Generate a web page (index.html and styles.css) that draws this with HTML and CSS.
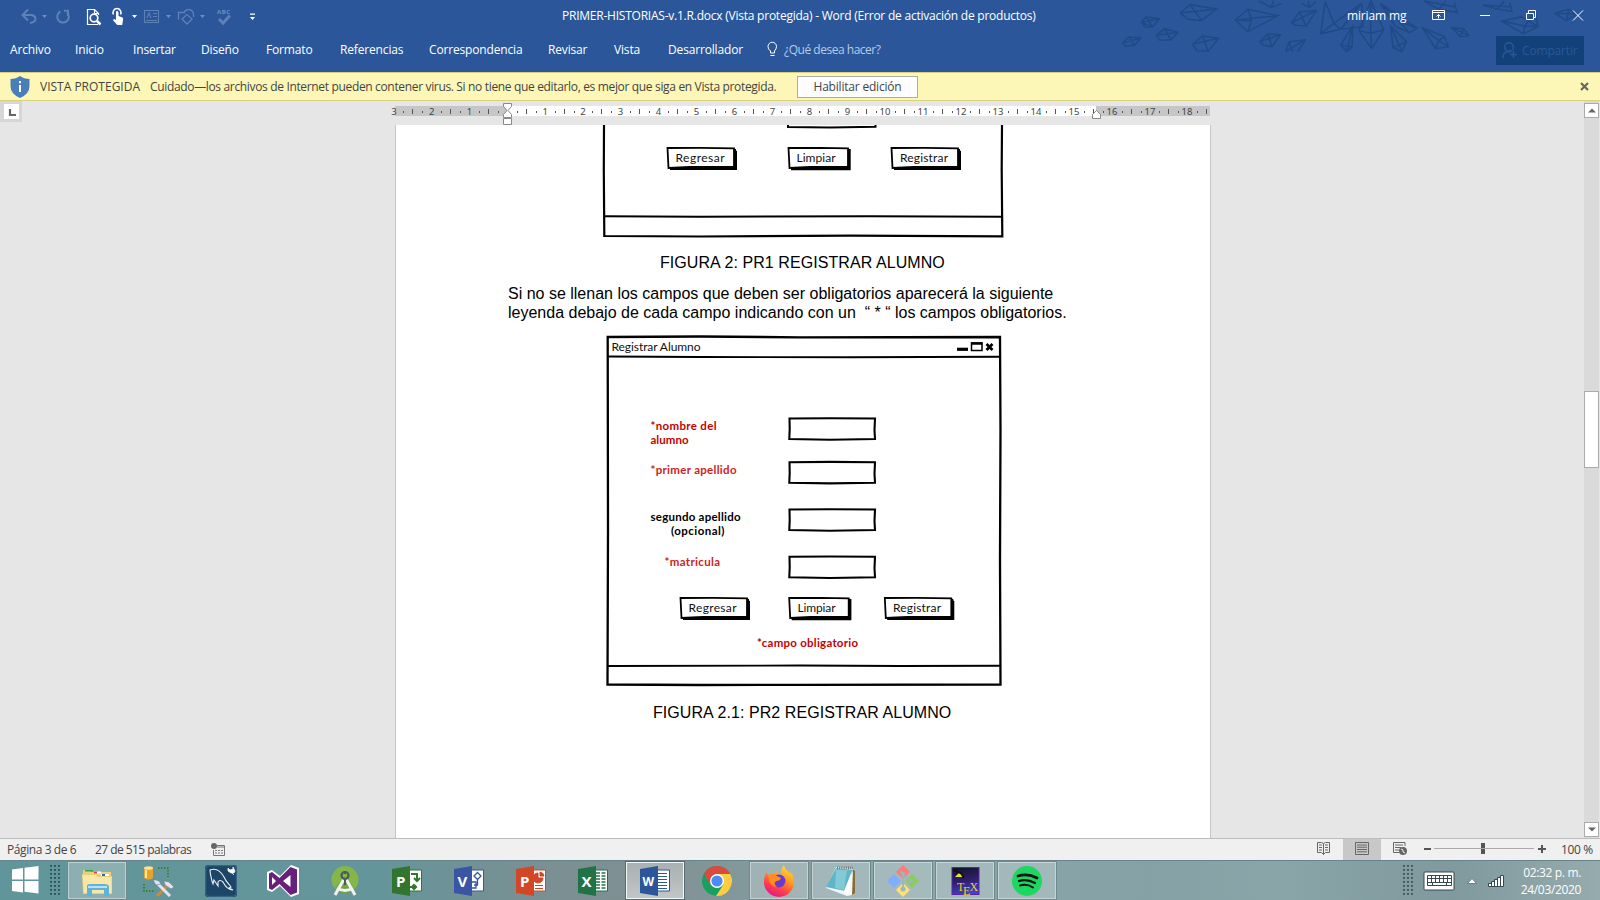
FILE: index.html
```html
<!DOCTYPE html>
<html lang="es">
<head>
<meta charset="utf-8">
<title>PRIMER-HISTORIAS-v.1.R.docx - Word</title>
<link rel="stylesheet" href="styles.css">
</head>
<body>
<div class="app">
  <header class="ribbon">
    <svg class="pattern" width="540" height="53" viewBox="0 0 1568 159" preserveAspectRatio="none" fill="none" stroke="#204a87" stroke-width="4.500">
      <path d="M236 67L250 51 289 56 269 80 248 82ZM236 67L289 56M250 51L269 80M236 67L269 80"/>
      <path d="M182 128L199 111 235 114 216 136 190 138ZM182 128L235 114M199 111L216 136"/>
      <path d="M280 106L304 86 342 97 322 119 290 121ZM280 106L342 97M304 86L322 119"/>
      <path d="M349 39L378 14 455 27 411 62 371 58ZM349 39L455 27M378 14L411 62"/>
      <path d="M385 133L414 108 460 115 430 154 398 152ZM385 133L460 115M414 108L430 154"/>
      <path d="M509 60L546 28 634 47 545 95ZM509 60L634 47M546 28L556 62 545 95M509 60L556 62"/>
      <path d="M578 3L613 22 644 10M613 22L620 3M702 10L725 22 744 5M725 22L720 3"/>
      <path d="M580 125L602 102 640 104 616 140 590 135ZM580 125L640 104M602 102L616 140"/>
      <path d="M673 68L695 36 745 31 715 78 684 76ZM673 68L745 31M695 36L715 78"/>
      <path d="M655 155L665 126 713 119 690 155M665 126L675 155M655 155L713 119"/>
      <path d="M770 3L757 101 815 88 876 10M770 3L795 70 757 101M795 70L876 10M795 70L815 88M876 10L880 80 815 88"/>
      <path d="M903 3L868 92 905 146 940 90ZM868 92L902 100 940 90M903 3L902 100 905 146"/>
      <path d="M850 78L815 135 832 155 848 140ZM850 78L832 155M815 135L848 140"/>
      <path d="M960 78L967 143 993 155 1006 125ZM960 78L993 155M967 143L1006 125"/>
      <path d="M930 10L1036 84 1015 98 975 80ZM930 10L985 65 1036 84M985 65L1015 98"/>
      <path d="M1053 84L1116 109 1128 140 1090 146ZM1053 84L1100 122 1128 140M1100 122L1090 146M1100 122L1116 109"/>
      <path d="M1057 3L1100 28 1153 37 1145 8M1057 3L1145 20M1100 28L1120 3"/>
      <path d="M1138 83L1173 86 1187 107 1162 110ZM1138 83L1187 107M1173 86L1162 110"/>
      <path d="M1228 15L1270 27 1312 34 1306 8M1228 15L1306 20M1270 27L1290 3"/>
      <path d="M1283 63L1340 50 1388 80 1345 102ZM1283 63L1350 78 1388 80M1350 78L1345 102M1350 78L1380 35 1388 80"/>
      <path d="M1437 40L1478 27 1500 42 1470 62ZM1437 40L1500 42M1478 27L1470 62"/>
    </svg>
    <div class="titlebar">
      <svg class="quick" width="270" height="32" viewBox="0 0 270 32" fill="none">
        <g stroke="#6f8fc0" stroke-width="2" opacity=".75">
          <path d="M23 15h9q3.500 1 3.500 4t-5.500 4M28 9.500L22.500 15l5.500 5.500"/>
          <path d="M60.500 11.500a5.800 5.800 0 1 0 6.500 1M64 10.700h5M68 10v6"/>
          <path d="M144.500 10.500h14v12h-14zM146 20.500h11M153 13.500h4M153 16.500h4M147 18l2-5 2 5" stroke-width="1.100"/>
          <path d="M178.500 19.500v-7h6.500M184 12.500a5 5 0 0 1 9.500 1.500v3M182 19l5-4.500 5 4.500-5 5z" stroke-width="1.300"/>
          <path d="M219 19l4 4 7-7.500" stroke-width="3"/>
        </g>
        <path d="M42 15h5l-2.500 3zM166 15h5l-2.500 3zM200 15h5l-2.500 3z" fill="#6f8fc0"/>
        <path d="M132 15h5l-2.500 3zM250 17h5l-2.500 3zM250 13.500h5v1.300h-5z" fill="#fff"/>
        <path d="M89 24.500h-1.500v-15h7l4 4v1.500M94.500 9.500v4h4" stroke="#fff" stroke-width="1.200"/>
        <circle cx="94" cy="18" r="3.800" stroke="#fff" stroke-width="1.700"/><path d="M97 21l3.500 3.500" stroke="#fff" stroke-width="2.500"/><path d="M88 24.500h10" stroke="#fff"/>
        <path d="M116 12.500q-.5-1.500 1-1.500t1.500 1.500V16l4 1.500q1 .5.500 2.500l-.8 5h-5l-4-4.500q-.5-1.500 1-1.500l1.800 1z" fill="#fff"/><path d="M113.500 14.500a4 4 0 1 1 7 0" stroke="#fff" stroke-width="1.500"/>
        <text class="abc" x="217" y="14" fill="#6f8fc0" textLength="13">ABC</text>
      </svg>
      <span class="doc-title">PRIMER-HISTORIAS-v.1.R.docx (Vista protegida) - Word (Error de activación de productos)</span>
      <span class="user">miriam mg</span>
      <svg class="controls" width="160" height="32" viewBox="0 0 160 32" fill="none" stroke="#fff">
        <path d="M2.500 10.500h12v9h-12zM2.500 12.500h12M8.500 18.500v-4M6.500 16.500l2-2 2 2"/>
        <path d="M50 15.500h10M96.500 13.500h7v6h-7zM98.500 13.500v-3h7v7h-2M143 10.500l10 10M153 10.500l-10 10"/>
      </svg>
    </div>
    <nav class="tabs">
      <span class="t1">Archivo</span><span class="t2">Inicio</span><span class="t3">Insertar</span><span class="t4">Diseño</span><span class="t5">Formato</span><span class="t6">Referencias</span><span class="t7">Correspondencia</span><span class="t8">Revisar</span><span class="t9">Vista</span><span class="t10">Desarrollador</span>
      <svg width="16" height="18" viewBox="0 0 16 18" fill="none" stroke="#fff"><path d="M4.500 12v-2Q1.800 8 2 5.500A4 4 0 0 1 10.500 5.500Q10.500 8 8.500 10v2zM4.500 14.500h4"/></svg>
      <span class="ask">¿Qué desea hacer?</span>
      <span class="share"><svg width="18" height="18" viewBox="0 0 18 18" fill="none" stroke="#2b579a" stroke-width="1.400"><circle cx="8" cy="6" r="4.300"/><path d="M2 17q0-6 5-6.500M10 11.500q-1-1-3-1M12.500 10v7M9 13.500h7"/></svg><span>Compartir</span></span>
    </nav>
  </header>

  <section class="notice">
    <svg width="20" height="22" viewBox="0 0 20 22"><path d="M10 0q4 3 9.500 3v7q0 8-9.500 12Q.5 18 .5 10V3Q6 3 10 0z" fill="#4a7ebb"/><path d="M9 5h2v2.300H9zM9 9h2v7H9z" fill="#fff"/></svg>
    <span class="notice-title">VISTA PROTEGIDA</span>
    <span class="notice-text">Cuidado—los archivos de Internet pueden contener virus. Si no tiene que editarlo, es mejor que siga en Vista protegida.</span>
    <span class="enable">Habilitar edición</span>
    <svg class="dismiss" width="9" height="9" viewBox="0 0 9 9" stroke="#666" stroke-width="2.200"><path d="M1 1l7 7M8 1L1 8"/></svg>
  </section>

  <main class="workspace">
    <div class="left-gutter"><span class="tabstop"><svg width="15" height="15" viewBox="0 0 15 15"><path d="M6 5v6h6" fill="none" stroke="#666" stroke-width="2.200"/></svg></span></div>
    <div class="column">
      <svg class="ruler" width="822" height="24" viewBox="390 101 822 24">
        <path d="M395 106h112v10h-112zM1096 106h114v10h-114z" fill="#c6c6c6"/><path d="M507 106h589v10h-589z" fill="#fff"/>
        <g class="ticks">
          <path d="M412.800 109v5.200M450.600 109v5.200M488.400 109v5.200M526.200 109v5.200M564 109v5.200M601.800 109v5.200M639.600 109v5.200M677.400 109v5.200M715.200 109v5.200M753 109v5.200M790.800 109v5.200M828.600 109v5.200M866.400 109v5.200M904.200 109v5.200M942 109v5.200M979.800 109v5.200M1017.600 109v5.200M1055.400 109v5.200M1093.200 109v5.200M1131 109v5.200M1168.800 109v5.200M1206.600 109v5.200"/>
          <path d="M403.400 111.500H1208" stroke-width="2" stroke-dasharray="1 17.900"/>
        </g>
        <g class="ruler-num"><text x="394" y="115">3</text><text x="431.700" y="115">2</text><text x="469.500" y="115">1</text><text x="545.300" y="115">1</text><text x="583" y="115">2</text><text x="620.500" y="115">3</text><text x="658.500" y="115">4</text><text x="696.500" y="115">5</text><text x="734.500" y="115">6</text><text x="772.500" y="115">7</text><text x="809.500" y="115">8</text><text x="847.500" y="115">9</text><text x="885" y="115">10</text><text x="923" y="115">11</text><text x="961" y="115">12</text><text x="998" y="115">13</text><text x="1036" y="115">14</text><text x="1074" y="115">15</text><text x="1112" y="115">16</text><text x="1150" y="115">17</text><text x="1187" y="115">18</text></g>
        <path d="M503.500 103.500h8v3l-3.500 4 3.500 4v3h-8v-3l3.500-4-3.500-4zM503.500 118.500h8v6h-8zM1092.500 118.500v-4l4-4 4 4v4z" fill="#fff" stroke="#888"/>
      </svg>
      <article class="page">
        <svg class="figure-one" width="402" height="114" viewBox="602 125 402 114" fill="none" stroke="#000">
          <path d="M604 125L603.800 170 604.300 236L700 236.500 850 235.600 1002.300 236.300 1001.700 170 1002 125" stroke-width="2.200"/>
          <path d="M604 216.300L700 216.800 870 216.200 1002 216.700M788 125v2L830 127.500 875.500 126.800V125" stroke-width="2"/>
          <g id="btn-wide"><path d="M670 168.500h64.500V150l2.500 1v19h-66.500z" fill="#000" stroke="none"/><path d="M734.500 149v20M670 168.500h66" stroke-width="3"/><path d="M667.500 148L700 147.800 734 148.300V167L690 166.800 668.500 168z" fill="#fff" stroke-width="1.800"/></g>
          <g id="btn-narrow"><path d="M849 149v21M791 168.500h59.500" stroke-width="3.400"/><path d="M788.500 148L820 147.800 848 148.300V167L810 166.800 789.500 168z" fill="#fff" stroke-width="1.800"/></g>
          <use href="#btn-wide" x="224"/>
          <g class="sketch-text"><text x="675.500" y="161.500" textLength="49">Regresar</text><text x="796.500" y="161.500" textLength="39">Limpiar</text><text x="900" y="161.500" textLength="48">Registrar</text></g>
        </svg>
        <p class="caption cap-one">FIGURA 2: PR1 REGISTRAR ALUMNO</p>
        <p class="body-text"><span>Si no se llenan los campos que deben ser obligatorios aparecerá la siguiente</span><br><span class="second">leyenda debajo de cada campo indicando con un&nbsp; “ * “ los campos obligatorios.</span></p>
        <svg class="figure-two" width="396" height="352" viewBox="606 335 396 352" fill="none" stroke="#000">
          <path d="M607.700 337L700 336.500 800 337.300 1000 337 1000.500 430 1000 560 1000.500 684.500 800 684.800 700 685 607.500 684.500 608 530z" stroke-width="2.300"/>
          <path d="M608 356.500L700 357 850 357.300 1000 356.700M608 666L800 665.500 900 666 1000 665.700" stroke-width="1.900"/>
          <path d="M957 349.300h11" stroke-width="3.200"/><path d="M971.500 343h10.500v7.500h-10.500z" stroke-width="1.500"/><path d="M971 343.500h11.500" stroke-width="2.500"/><path d="M986.500 344l6 6M992.500 344l-6 6" stroke-width="2.700"/>
          <g id="field" stroke-width="2.100"><path d="M789.500 418.500L830 418.200 875 418.500 874.500 430 875 439 830 439.700 789.300 439 789.700 429z"/></g>
          <use href="#field" y="43.700"/><use href="#field" y="91"/><use href="#field" y="138.300"/>
          <use href="#btn-wide" x="13" y="450"/><use href="#btn-narrow" x=".7" y="450"/><use href="#btn-wide" x="217.300" y="450"/>
          <g class="sketch-text">
            <text x="611.500" y="350.500" textLength="89">Registrar Alumno</text>
            <text x="688.500" y="612" textLength="48">Regresar</text><text x="797.500" y="612" textLength="38">Limpiar</text><text x="893" y="612" textLength="48">Registrar</text>
          </g>
          <g class="sketch-label">
            <text x="650.500" y="429.500" textLength="66">*nombre del</text><text x="650.500" y="443.500" textLength="38">alumno</text>
            <text class="soft" x="650.500" y="473.500" textLength="86">*primer apellido</text>
            <text class="optional" x="650.500" y="520.500" textLength="90">segundo apellido</text><text class="optional" x="671" y="534.500" textLength="53.500">(opcional)</text>
            <text class="soft" x="664.500" y="566.300" textLength="55.500">*matricula</text>
            <text x="757" y="646.500" textLength="101">*campo obligatorio</text>
          </g>
        </svg>
        <p class="caption cap-two">FIGURA 2.1: PR2 REGISTRAR ALUMNO</p>
      </article>
    </div>
    <div class="scrollbar">
      <span class="arrow"><svg width="8" height="5" viewBox="0 0 8 5"><path d="M0 4.500L4 .5l4 4z" fill="#666"/></svg></span>
      <span class="thumb"></span>
      <span class="arrow"><svg width="8" height="5" viewBox="0 0 8 5"><path d="M0 .5h8l-4 4z" fill="#666"/></svg></span>
    </div>
  </main>

  <footer class="status">
    <span class="pages">Página 3 de 6</span><span class="words">27 de 515 palabras</span>
    <svg width="14" height="14" viewBox="0 0 14 14" fill="none" stroke="#777"><path d="M6 2.500h7.500v10h-11V7M4 7.500h2M7 7.500h2M10 7.500h2M4 10h2M7 10h2M10 10h2M6 4h7"/><circle cx="3" cy="3" r="3" fill="#666" stroke="none"/></svg>
    <svg class="views" width="100" height="21" viewBox="0 0 100 21" fill="none" stroke="#666">
      <path d="M29 0h38v21H29z" fill="#c8c8c8" stroke="none"/>
      <path d="M3.500 3.500h4l2 1 2-1h4v10h-4l-2 2-2-2h-4zM9.500 4.500v11M5 6h3M5 8.500h3M5 11h3M11 6h3M11 8.500h3M11 11h3"/>
      <path d="M41.500 3.500h13v12h-13zM43 6h10M43 8.200h10M43 10.500h10M43 12.800h10"/>
      <path d="M91 7V3.500H79.500v10H85M81 6h8M81 8.500h6M81 11h4"/><circle cx="89" cy="12" r="4" fill="#666" stroke="none"/><path d="M87 10l2 1v2l2 1" stroke="#eee"/>
    </svg>
    <svg class="zoombar" width="124" height="21" viewBox="0 0 124 21"><path d="M0 9h7v2H0zM114 9h8v2h-8zM117 6h2v8h-2zM57 4h4v11h-4z" fill="#555"/><path d="M10 9.500h100" stroke="#aaa"/></svg>
    <span class="percent">100 %</span>
  </footer>

  <div class="taskbar">
    <svg class="start" width="66" height="40" viewBox="0 0 66 40"><path d="M12 9.500l11-1.500v11.500H12zM24.500 7.800L38.500 6v13.500h-14zM12 21h11v11.500L12 31zM24.500 21h14v12.500l-14-1.800z" fill="#fff"/><path d="M51 5v31M55 5v31M59 5v31" stroke="#2f4a4e" stroke-width="1.800" stroke-dasharray="1.700 2.300"/></svg>
    <span class="task open"><svg width="32" height="32" viewBox="0 0 32 32"><path d="M2 5h7l1 2h20v6H2z" fill="#e9d27d"/><path d="M4 5h8v1.500H4z" fill="#34a34a"/><path d="M13 6.500h7v2h-7z" fill="#fff"/><path d="M13 6.500h3v2h-3z" fill="#d44"/><path d="M20 9h8v2h-8z" fill="#fff"/><path d="M21 9h3v2h-3z" fill="#36c"/><path d="M1 9h14l2 2h14v18H2z" fill="#e8cf7c"/><path d="M1.500 10h13l2 2h14v16H3z" fill="#f8e7a6"/><path d="M6 31V21q0-2 3-2h14q5 0 5 3v9h-5v-6H11v6z" fill="#5fb2dc"/><path d="M7 21h19v2H7z" fill="#b6e3f5"/></svg></span>
    <span class="task"><svg width="32" height="32" viewBox="0 0 32 32"><path d="M1 3v10q4 3 9 0V3z" fill="#e9a32a"/><ellipse cx="5.500" cy="3" rx="4.500" ry="1.800" fill="#fbe38d"/><path d="M3 5v8" stroke="#ffe7a0" stroke-width="2"/><path d="M15 3h10v9M1 19v7h10" fill="none" stroke="#2c7a22" stroke-width="1.500" stroke-dasharray="1.500 1.500"/><path d="M14 31l13-13" stroke="#cf8b35" stroke-width="3"/><path d="M13 17l14 14" stroke="#e2e5f0" stroke-width="3"/><path d="M21 16l5 1 5 5-3 2-6-4zM10 15l3 5 5-1-2-3-3-1z" fill="#dfe3ec" stroke="#74809a" stroke-width=".6"/></svg></span>
    <span class="task"><svg width="32" height="32" viewBox="0 0 32 32"><rect width="32" height="32" rx="3" fill="#1d4567"/><rect x=".7" y=".7" width="30.600" height="30.600" rx="3" fill="none" stroke="#3b6b91"/><path d="M8 19C7 17 5 8 5 5c5-2 10 0 14 7 2 5 5 7 7 10l-2 1 4 2c-4 0-8-4-10-8-2-2-4-2-5 0v4l-4-6z" fill="none" stroke="#e9f0f5" stroke-width="1.100"/><path d="M23 4l4 4 2 2M23 3l2 2 3-1v-2l2 4-1 2-3 0-3-2z" stroke="#fff" fill="#fff" stroke-width=".7"/></svg></span>
    <span class="task"><svg width="32" height="32" viewBox="0 0 32 32"><path d="M24 0l8 3v26l-8 3-11-11-8 6-5-2V7l5-2 8 6z" fill="#fff"/><path d="M23.500 2l6.500 2.500v23L23.500 30 12.500 19 5 25l-3-1.500v-15L5 7l7.500 6zM23.500 10L16 16l7.500 6zM5 12v8l4-4z" fill="#68217a" fill-rule="evenodd"/></svg></span>
    <span class="task"><svg width="32" height="32" viewBox="0 0 32 32"><circle cx="16" cy="14.500" r="13.500" fill="#84b64a"/><path d="M6 23L16 12l10 12-6 4H12z" fill="#699c43" opacity=".7"/><path d="M15 14L6 30M17 14l9 16M8 23q8 5 16 0" fill="none" stroke="#f2f2ef" stroke-width="3"/><circle cx="16" cy="10.500" r="3.500" fill="none" stroke="#4d5b5b" stroke-width="2.200"/><path d="M15 6h2v3h-2zM15 13h2v7h-2z" fill="#4d5b5b"/></svg></span>
    <span class="task"><svg width="32" height="32" viewBox="0 0 32 32"><path d="M16 5h14.500v21H16z" fill="#fff" stroke="#31752f"/><path d="M20 9h6v6M23 13l3 3 3-3M19 22h4" fill="none" stroke="#31752f" stroke-width="2"/><path d="M23 18.500l3.500 3.500-3.500 3.500-3.500-3.500z" fill="#31752f"/><path d="M1 4l18-3v30L1 28z" fill="#31752f"/><text class="glyph" x="5" y="21.500">P</text></svg></span>
    <span class="task"><svg width="32" height="32" viewBox="0 0 32 32"><path d="M16 5h14.500v21H16z" fill="#fff" stroke="#3955a3"/><path d="M21 11l3.500-3.500L28 11l-3.500 3.500zM24.500 14v6H21M18 17h5v6h-5" fill="none" stroke="#3955a3" stroke-width="1.300"/><path d="M1 4l18-3v30L1 28z" fill="#3955a3"/><text class="glyph" x="4.500" y="21.500">V</text></svg></span>
    <span class="task"><svg width="32" height="32" viewBox="0 0 32 32"><path d="M16 5h14.500v21H16z" fill="#fff" stroke="#d24726"/><path d="M23 8v5h5a5 5 0 1 1-5-5M25 7v4h4q0-3-4-4M20 20.500h8M20 23.500h8" fill="#d24726" stroke="#d24726"/><path d="M1 4l18-3v30L1 28z" fill="#d24726"/><text class="glyph" x="5" y="21.500">P</text></svg></span>
    <span class="task"><svg width="32" height="32" viewBox="0 0 32 32"><path d="M16 5h14.500v21H16z" fill="#fff" stroke="#217346"/><path d="M19 8h4M24.500 8h4M19 11h4M24.500 11h4M19 14h4M24.500 14h4M19 17h4M24.500 17h4M19 20h4M24.500 20h4M19 23h4M24.500 23h4" stroke="#217346" stroke-width="1.500"/><path d="M1 4l18-3v30L1 28z" fill="#217346"/><text class="glyph" x="4.500" y="21.500">X</text></svg></span>
    <span class="task active"><svg width="32" height="32" viewBox="0 0 32 32"><path d="M16 5h14.500v21H16z" fill="#fff" stroke="#2b579a"/><path d="M19 8.500h9M19 11.500h9M19 14.500h9M19 17.500h9M19 20.500h9M19 23.500h9" stroke="#2b579a" stroke-width="1.200"/><path d="M1 4l18-3v30L1 28z" fill="#2b579a"/><text class="glyph wide" x="3.500" y="20.500">W</text></svg></span>
    <span class="task"><svg width="32" height="32" viewBox="0 0 32 32"><circle cx="16" cy="16" r="15" fill="#18a05e"/><path d="M3 8.500A15 15 0 0 1 29 8.500H16l-7 11z" fill="#db4a3f"/><path d="M29.200 9A15 15 0 0 1 15 31l7.500-11.500L16 9z" fill="#ffcd42"/><circle cx="16" cy="16" r="7" fill="#fff"/><circle cx="16" cy="16" r="5.600" fill="#4c8bf5"/></svg></span>
    <span class="task open"><svg width="32" height="32" viewBox="0 0 32 32"><defs><linearGradient id="fox" x1=".8" y1="0" x2=".3" y2="1"><stop offset="0" stop-color="#ffe33d"/><stop offset=".4" stop-color="#ff9a1f"/><stop offset=".75" stop-color="#ff3950"/><stop offset="1" stop-color="#e31587"/></linearGradient></defs><path d="M4 7q0 3 2 3 3-2 5-1l3-3q0 3 2 4l3-1q-2-5 2-9 1 5 5 7l1 3q1-2 0-4 4 5 4 11a15 15 0 0 1-30 0Q1 11 4 7z" fill="url(#fox)"/><circle cx="16" cy="16" r="6.500" fill="#6a3bd0"/><path d="M5 10q5-2 9 1l4 2q-1 3-5 3-3 3 1 6-7-1-8-7z" fill="#ff8b21"/></svg></span>
    <span class="task open"><svg width="32" height="32" viewBox="0 0 32 32"><path d="M27 4l3 2v22l-3 2z" fill="#8b6a37"/><path d="M11 2L1 23l21 8 5-1 1-26z" fill="#f3f7f8"/><path d="M11 3L1 22l19 4 8-21z" fill="#5fb6c8"/><path d="M11 4l-1 19 9 2 3-20z" fill="#a9dbe3" opacity=".5"/><path d="M12 3h16" stroke="#777" stroke-width="3" stroke-dasharray="1 1.200"/><path d="M27 6l-8 20 4 4z" fill="#fff"/></svg></span>
    <span class="task open"><svg width="32" height="32" viewBox="0 0 32 32"><path d="M16 0l7 7-7 7-7-7z" fill="#ff7b7b"/><path d="M25 9l7 7-7 7-7-7z" fill="#89ce5c"/><path d="M16 18l7 7-7 7-7-7z" fill="#ffe173"/><path d="M7 9l7 7-7 7-7-7z" fill="#7fadff"/><path d="M13 6l3 3v15M17 11l6 5" stroke="#a2b4b7" stroke-width="1.800" fill="none"/><circle cx="16" cy="9" r="2" fill="#a2b4b7"/><circle cx="16" cy="24" r="2.500" fill="#a2b4b7"/><circle cx="24" cy="16" r="2" fill="#a2b4b7"/></svg></span>
    <span class="task open"><svg width="32" height="32" viewBox="0 0 32 32"><defs><linearGradient id="tex" x1=".4" y1="0" x2=".6" y2="1"><stop offset="0" stop-color="#11152c"/><stop offset=".5" stop-color="#31206e"/><stop offset="1" stop-color="#3a43e0"/></linearGradient></defs><rect x="3" y="2.500" width="27" height="27" fill="url(#tex)" stroke="#5a269b"/><path d="M6 12l4-4 5 4z" fill="#e8e53a"/><path d="M4 5l8 3 3 5" stroke="#111" fill="none" stroke-width="2"/><text class="tex" x="8" y="26">T</text><text class="tex" x="14" y="29.500">E</text><text class="tex" x="20.500" y="26">X</text></svg></span>
    <span class="task open"><svg width="32" height="32" viewBox="0 0 32 32" fill="none" stroke="#151515" stroke-linecap="round"><circle cx="16" cy="16" r="15" fill="#1ed760" stroke="none"/><path d="M7 11q10-3 19 2" stroke-width="2.800"/><path d="M8 16q8-2.500 16 2" stroke-width="2.300"/><path d="M9 20.500q7-2 13 2" stroke-width="2"/></svg></span>
    <svg class="tray" width="120" height="40" viewBox="0 0 120 40">
      <path d="M5 5v31M9 5v31M13 5v31" stroke="#2f4a4e" stroke-width="1.700" stroke-dasharray="1.700 2.300"/>
      <rect x="25" y="12" width="30" height="18" rx="1" fill="#fff" stroke="#344a50"/><path d="M28.500 15.500h24v10h-24zM28.500 18.500h24M28.500 22.500h24M32.500 15.500v7M36.500 15.500v7M40.500 15.500v7M44.500 15.500v7M48.500 15.500v7M33.500 22.500v3M47.500 22.500v3" fill="none" stroke="#344a50"/>
      <path d="M68.500 23.500l4.500-5 4.500 5z" fill="#fff" stroke="#587078" stroke-width=".8"/>
      <path d="M89.500 23.500h3v3h-3zM92.500 21.500h3v5h-3zM95.500 19.500h3v7h-3zM98.500 17.500h3v9h-3zM101.500 15.500h3v11h-3z" fill="#fff" stroke="#344a50"/>
    </svg>
    <div class="clock"><span>02:32 p. m.</span><span>24/03/2020</span></div>
  </div>
</div>
</body>
</html>
```
FILE: styles.css
```css
* { box-sizing: border-box; }
body { margin: 0; font-family: "Open Sans", "Noto Sans", sans-serif; font-size: 12px; color: #444; }
svg { display: block; flex: none; }
span { white-space: nowrap; }
.app { width: 1600px; height: 900px; display: flex; flex-direction: column; overflow: hidden; }

.ribbon { height: 72px; background: #2b579a; color: #fff; position: relative; flex: none; }
.pattern { position: absolute; left: 1060px; top: 0; }
.titlebar { height: 32px; display: flex; align-items: center; position: relative; }
.abc { font-size: 6px; font-weight: 700; }
.doc-title { margin-left: 292px; width: 785px; letter-spacing: -.23px; padding-bottom: 2px; }
.user { width: 83px; padding-bottom: 2px; letter-spacing: -.15px; }
.tabs { height: 36px; display: flex; align-items: center; position: relative; padding-left: 10px; letter-spacing: -.16px; }
.tabs > span { padding-bottom: 2px; }
.t1 { width: 65px; } .t2 { width: 58px; } .t3 { width: 68px; } .t4 { width: 65px; } .t5 { width: 74px; }
.t6 { width: 89px; } .t7 { width: 119px; } .t8 { width: 66px; } .t9 { width: 54px; } .t10 { width: 98px; }
.ask { margin-left: 2px; color: #b9c9e4; letter-spacing: -.48px; }
.tabs .share { margin-left: auto; margin-right: 16px; width: 88px; height: 29px; background: #124078; color: #2b579a; display: flex; align-items: center; gap: 3px; padding: 0 0 0 5px; }

.notice { height: 29px; background: #fcf7b6; border-top: 1px solid #d8d280; border-bottom: 1px solid #d8d280; display: flex; align-items: center; padding: 0 11px 0 10px; flex: none; }
.notice-title { margin-left: 10px; width: 110px; }
.notice-text { width: 647px; letter-spacing: -.34px; }
.enable { width: 121px; height: 22px; border: 1px solid #ababab; background: #fdfdfd; display: flex; align-items: center; justify-content: center; letter-spacing: -.2px; }
.dismiss { margin-left: auto; }

.workspace { height: 737px; flex: none; background: #e6e6e6; display: flex; }
.left-gutter { width: 390px; }
.tabstop { display: flex; width: 22px; height: 21px; background: #d6d6d6; padding: 3px 0 0 4px; }
.tabstop svg { background: #fff; }
.column { width: 1194px; }
.ruler { overflow: visible; }
.ticks { stroke: #555; shape-rendering: crispEdges; }
.ruler-num { font: 9.500px "Noto Sans", sans-serif; text-anchor: middle; fill: #444; }
.page { width: 816px; height: 713px; margin-left: 5px; background: #fff; border: 1px solid #c6c6c6; border-width: 0 1px; overflow: hidden; color: #000; font: 16px/19px "Liberation Sans", Arial, sans-serif; }
.page p { margin: 0; }
.figure-one { margin-left: 206px; }
.caption { white-space: nowrap; letter-spacing: .07px; }
.page .cap-one { margin: 14px 0 0 264px; }
.body-text { padding: 12px 0 0 112px; height: 63px; }
.figure-two { margin-left: 210px; }
.page .cap-two { margin: 16px 0 0 257px; }
.sketch-text { font: 12px "Lato", sans-serif; fill: #111; stroke: none; }
.sketch-label { font: 700 11.500px "Lato", sans-serif; fill: #c80000; stroke: none; }
.soft { fill: #cf2222; }
.optional { fill: #000; }

.scrollbar { width: 15px; background: #dadada; padding: 2px 0 1px; display: flex; flex-direction: column; }
.arrow { width: 15px; height: 15px; border: 1px solid #ababab; background: #fff; display: flex; align-items: center; justify-content: center; }
.thumb { margin: 273px 0 auto; height: 77px; border: 1px solid #ababab; background: #fff; }

.status { height: 22px; flex: none; background: #f0f0f0; border-top: 1px solid #bdbdbd; display: flex; align-items: center; padding-left: 7px; }
.status span { flex: none; padding-bottom: 1px; }
.pages { width: 88px; letter-spacing: -.42px; }
.words { width: 116px; letter-spacing: -.55px; }
.views { margin-left: 1089px; }
.zoombar { margin-left: 10px; margin-right: 13px; }
.percent { letter-spacing: -.35px; }

.taskbar { height: 40px; flex: none; display: flex; border-top: 1px solid #66858b; background: linear-gradient(90deg, #60969a 0, #64959a 380px, #789093 520px, #7f8f92 640px, #83989c 740px, #8aa7ab 900px, #86a1a5 1150px, #8aa5a8 1280px, #7f999d 1450px, #96abae 1600px); }
.start { margin-top: -1px; }
.task { width: 60px; margin: 0 1px; height: 39px; display: flex; align-items: center; justify-content: center; border: 1px solid transparent; }
.open { background: rgba(205, 216, 216, .4); border-color: #70898d; box-shadow: inset 0 0 0 1px rgba(220, 230, 230, .6); }
.active { background: linear-gradient(#a8b0b1, #c2c6c6); border-color: #566c70; box-shadow: inset 0 0 0 1px #f4f7f7; }
.glyph { font: 700 15px "Open Sans", sans-serif; fill: #fff; }
.wide { font-size: 12px; }
.tex { font: 12px "Liberation Serif", serif; fill: #f4cb20; }
.tray { margin: -1px 0 0 341px; }
.clock { width: 60px; margin-left: 2px; color: #fff; display: flex; flex-direction: column; align-items: flex-end; line-height: 17px; padding-top: 3px; letter-spacing: -.35px; }
```
